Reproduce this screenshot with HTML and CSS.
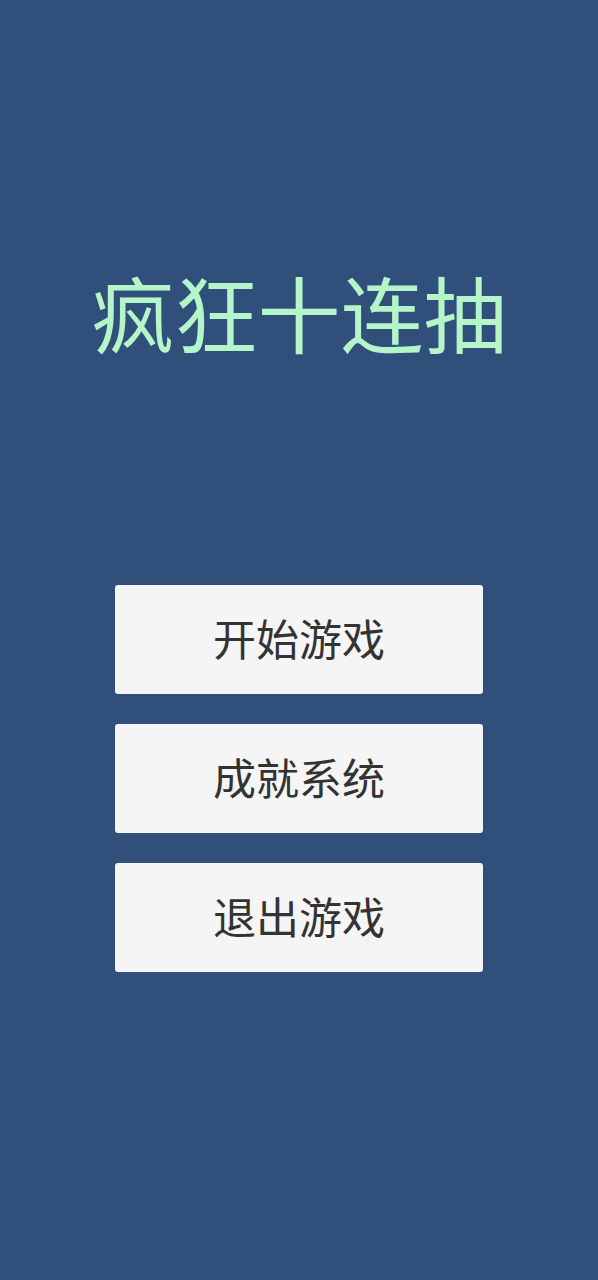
FILE: index.html
```html
<!DOCTYPE html>
<html lang="zh-CN">
<head>
<meta charset="utf-8">
<title>疯狂十连抽</title>
<link rel="stylesheet" href="styles.css">
</head>
<body>
<main class="screen">
  <h1 class="title">疯狂十连抽</h1>
  <nav class="menu">
    <button class="menu-btn">开始游戏</button>
    <button class="menu-btn">成就系统</button>
    <button class="menu-btn">退出游戏</button>
  </nav>
</main>
</body>
</html>
```
FILE: styles.css
```css
html, body {
  margin: 0;
  padding: 0;
  background: #314f7b;
}
.screen {
  width: 598px;
  height: 1280px;
  display: flex;
  flex-direction: column;
  align-items: center;
  font-family: "Noto Sans CJK SC", "Noto Sans", sans-serif;
}
.title {
  margin: 261px 0 0 0;
  font-size: 83px;
  line-height: 100px;
  font-weight: 400;
  color: #b4f5c9;
  letter-spacing: 0;
}
.menu {
  margin-top: 224px;
  display: flex;
  flex-direction: column;
  gap: 30px;
}
.menu-btn {
  width: 368px;
  height: 109px;
  border: none;
  border-radius: 3px;
  background: #f5f5f5;
  color: #333;
  font-family: "Noto Sans CJK SC", "Noto Sans", sans-serif;
  font-size: 43px;
  font-weight: 400;
  padding: 0 0 4px 0;
  line-height: 1;
}
```
